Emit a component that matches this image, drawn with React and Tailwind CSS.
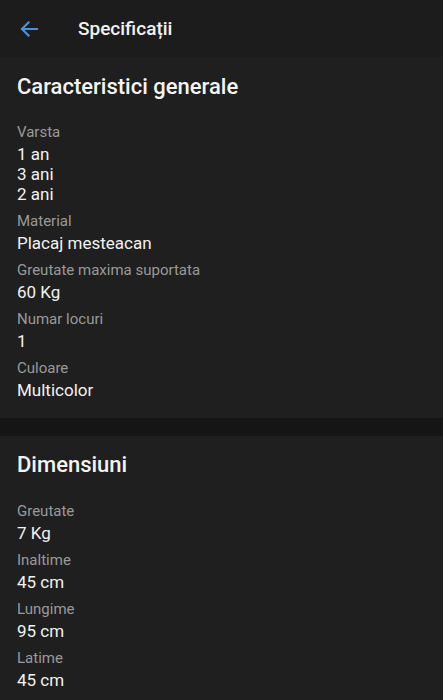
export default function App() {
  const sections = [
    {
      title: "Caracteristici generale",
      items: [
        ["Varsta", ["1 an", "3 ani", "2 ani"]],
        ["Material", ["Placaj mesteacan"]],
        ["Greutate maxima suportata", ["60 Kg"]],
        ["Numar locuri", ["1"]],
        ["Culoare", ["Multicolor"]],
      ],
    },
    {
      title: "Dimensiuni",
      items: [
        ["Greutate", ["7 Kg"]],
        ["Inaltime", ["45 cm"]],
        ["Lungime", ["95 cm"]],
        ["Latime", ["45 cm"]],
      ],
    },
  ];
  return (
    <div className="w-[443px] h-[700px] overflow-hidden bg-[#1e1e1e] font-['Roboto',sans-serif]">
      <div className="h-[57px] bg-[#1c1c1c] flex items-center">
        <div className="w-[78px] pl-[17px] flex items-center">
          <svg width="24" height="24" viewBox="0 0 24 24">
            <path d="M20 12H5M11.5 5.5L5 12l6.5 6.5" fill="none" stroke="#4a90dc" strokeWidth="2.2" strokeLinecap="square" />
          </svg>
        </div>
        <div className="text-[19px] font-medium text-[#f2f2f2] leading-none">Specificații</div>
      </div>
      {sections.map((s, si) => (
        <div key={si} className={si > 0 ? "border-t-[18px] border-[#151515]" : ""}>
          <div className={"px-[17px] pb-[18px] bg-[#1f1f1f] " + (si === 0 ? "pt-[17px]" : "pt-[16px]")}>
            <div className="text-[22px] font-medium text-[#f4f4f4] leading-[26px] h-[26px]">{s.title}</div>
            <div className={si === 0 ? "mt-[22px]" : "mt-[23px]"}>
              {s.items.map(([label, vals], i) => (
                <div key={i} className={i > 0 ? "mt-[7px]" : ""}>
                  <div className="text-[15px] leading-[20px] text-[#9a9a9a]">{label}</div>
                  <div className="mt-[2px]">
                    {vals.map((v, j) => (
                      <div key={j} className="text-[17px] leading-[20px] text-[#f2f2f2]">{v}</div>
                    ))}
                  </div>
                </div>
              ))}
            </div>
          </div>
        </div>
      ))}
    </div>
  );
}
